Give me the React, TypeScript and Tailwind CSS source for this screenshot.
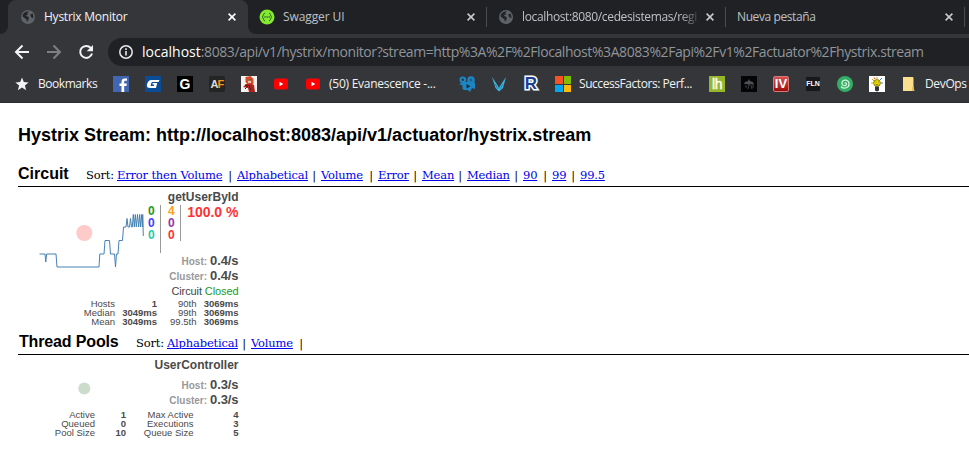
import React from "react";

const ui = "font-['Open_Sans',sans-serif]";
const arial = "font-['Liberation_Sans',Arial,sans-serif]";

function Globe() {
  return (
    <svg width="16" height="16" viewBox="0 0 16 16" className="shrink-0">
      <circle cx="8" cy="8" r="7" fill="#5f6368" />
      <path d="M2.4 7.300C2.800 4 5.500 2.200 9 2.600L7.300 4 8 5.600 5.600 6.600 8.800 8.200 8.600 10.400 6.800 13 6.600 10.600 4.500 9ZM10.200 5.400 12.800 4.600 13.600 9 11.400 8.400Z" fill="#242529" />
    </svg>
  );
}

function Close({ color = "#c5c8cc" }: { color?: string }) {
  return (
    <svg width="8" height="8" viewBox="0 0 8 8" className="shrink-0">
      <path d="M.6.6 7.4 7.4M7.4.6.6 7.4" stroke={color} strokeWidth="1.6" />
    </svg>
  );
}

function Tabs() {
  return (
    <div className="flex h-[34px] bg-[#202124] text-[12px] leading-[34px] text-[#bdc1c6]">
      <div className="w-2 shrink-0 bg-[#35363a]"><div className="h-full rounded-br-[8px] bg-[#202124]" /></div>
      <div className="flex w-[240px] shrink-0 items-center rounded-t-[8px] bg-[#35363a] pl-3 text-[#f1f3f4]">
        <Globe />
        <span className="ml-2 w-[184px] whitespace-nowrap tracking-[-0.24px]">Hystrix Monitor</span>
        <Close color="#fff" />
      </div>
      <div className="w-[238px] shrink-0 bg-[#35363a]">
        <div className="flex h-full items-center rounded-bl-[8px] border-r border-transparent bg-[#202124] pl-[11px]">
          <svg width="16" height="16" viewBox="0 0 16 16" className="shrink-0">
            <circle cx="8" cy="8" r="7.5" fill="#85ea2d" />
            <path d="M6 4.200C4 4 4.800 7.400 3.200 8 4.800 8.600 4 12 6 11.800M10 4.200c2-.2 1.200 3.200 2.800 3.800C11.200 8.600 12 12 10 11.800" stroke="#2f6230" fill="none" />
            <path d="M5.400 8h5.600" stroke="#2f6230" strokeWidth="1.300" strokeDasharray="1.300 .8" />
          </svg>
          <span className="ml-[8px] w-[184px] whitespace-nowrap tracking-[-0.1px]">Swagger UI</span>
          <Close />
        </div>
      </div>
      <div className="flex w-[239px] shrink-0 items-center">
        <i className="h-5 w-px bg-[#4a4c50]" />
        <span className="ml-[11px] flex"><Globe /></span>
        <span className="ml-2 w-[177px] whitespace-nowrap tracking-[-0.36px] [mask-image:linear-gradient(to_right,black_158px,transparent_180px)]">localhost:8080/cedesistemas/regi</span>
        <span className="ml-[7px] flex"><Close /></span>
      </div>
      <div className="flex w-[239px] shrink-0 items-center">
        <i className="h-5 w-px bg-[#4a4c50]" />
        <span className="ml-[11px] w-[208px] whitespace-nowrap tracking-[-0.4px]">Nueva pestaña</span>
        <Close />
      </div>
      <i className="mt-[7px] h-5 w-px bg-[#4a4c50]" />
    </div>
  );
}

function Toolbar() {
  return (
    <div className="flex h-[36px] items-center bg-[#35363a] pl-[14px]">
      <svg width="16" height="16" viewBox="0 0 16 16"><path d="M15 8H2M8.500 1.500 2 8l6.500 6.500" stroke="#f1f3f4" strokeWidth="2" fill="none" /></svg>
      <svg width="16" height="16" viewBox="0 0 16 16" className="ml-4"><path d="M1 8h13M7.500 1.500 14 8l-6.500 6.500" stroke="#7d7f83" strokeWidth="2" fill="none" /></svg>
      <svg width="16" height="16" viewBox="0 0 16 16" className="ml-4"><path d="M12.800 4A6 6 0 1 0 14 9.500" stroke="#f1f3f4" strokeWidth="2" fill="none" /><path d="M15 1v6.300H8.700Z" fill="#f1f3f4" /></svg>
      <div className="ml-[14px] flex h-7 flex-1 items-center rounded-l-full bg-[#202124] pl-[11px]">
        <svg width="14" height="14" viewBox="0 0 14 14"><circle cx="7" cy="7" r="6.200" stroke="#e8eaed" strokeWidth="1.500" fill="none" /><path d="M7 6v4.500M7 3.300v1.700" stroke="#e8eaed" strokeWidth="1.600" /></svg>
        <span className="ml-[9px] whitespace-nowrap text-[14px] leading-7 tracking-[-0.42px] text-[#8f959b]"><span className="tracking-[0.02px] text-white">localhost</span>:8083/api/v1/hystrix/monitor?stream=http%3A%2F%2Flocalhost%3A8083%2Fapi%2Fv1%2Factuator%2Fhystrix.stream</span>
      </div>
    </div>
  );
}

function YouTube() {
  return <svg width="16" height="16" viewBox="0 0 16 16" className="shrink-0"><rect x="1" y="2.500" width="14" height="11" rx="2.500" fill="#f00" /><path d="M6.500 5.800v4.400L10.300 8Z" fill="#fff" /></svg>;
}

function Bookmarks() {
  return (
    <div className="flex h-[33px] items-center gap-4 border-b border-[#292a2d] bg-[#35363a] pb-[4px] pl-[14px] text-[12px] leading-[28px] text-[#f1f3f4]">
      <div className="flex w-[83px] shrink-0 items-center gap-2">
        <svg width="16" height="16" viewBox="0 0 16 16" className="shrink-0"><path d="m8 1.500 1.800 4.600 4.800.3-3.700 3.100 1.200 4.800L8 11.600l-4.100 2.700 1.200-4.800L1.400 6.400l4.800-.3Z" fill="#f1f3f4" /></svg>
        <span className="whitespace-nowrap tracking-[-0.45px]">Bookmarks</span>
      </div>
      <svg width="16" height="16" viewBox="0 0 16 16" className="shrink-0"><rect width="16" height="16" fill="#4267b2" /><path d="M8.500 16V10H6.500V7.500h2V6c0-2.400 1.300-3.500 3.200-3.500H14v2.300h-1.500c-1 0-1.300.4-1.300 1.300v1.400h2.700l-.4 2.500h-2.300v6Z" fill="#fff" /></svg>
      <svg width="16" height="16" viewBox="0 0 16 16" className="shrink-0"><rect width="16" height="16" fill="#0b4c97" /><path d="M14.500 4H6.500C4 4 2.500 6 2 8.500 1.500 11 2.500 12 5 12h6l1.200-5H7.700l-.4 1.500h1.900L8.800 10H5.600l.8-3.200c.2-.6.5-.9 1.200-.9h6Z" fill="#fff" /></svg>
      <div className={`flex size-4 shrink-0 items-center justify-center bg-black text-[14px] leading-4 font-bold text-white ${arial}`}>G</div>
      <div className={`flex size-4 shrink-0 items-center justify-center rounded-[2px] bg-[#242424] text-[11px] leading-4 font-bold tracking-[-0.8px] text-[#ddd] ${arial}`}>A<span className="text-[#f7941d]">F</span></div>
      <svg width="16" height="16" viewBox="0 0 16 16" className="shrink-0"><rect width="16" height="16" fill="#f4f1ee" /><path d="m4.500 1 5-1 3 3v5l-5 1-3-3Z" fill="#d94a28" /><path d="m7 3 3 1v4H7Z" fill="#f2bd9d" /><path d="m5 8 4-1 4 2 1 7H8L7 12l-5-1Z" fill="#b8201b" /><path d="m4 9 3 1-3 3M8 9l2 5M7 4h3" stroke="#45221e" fill="none" /></svg>
      <YouTube />
      <div className="flex w-[138px] shrink-0 items-center gap-2">
        <YouTube />
        <span className="whitespace-nowrap tracking-[-0.25px]">(50) Evanescence -...</span>
      </div>
      <svg width="16" height="16" viewBox="0 0 16 16" className="shrink-0">
        <g fill="#1a86c4"><circle cx="3.800" cy="3.800" r="3.300" /><circle cx="12" cy="4" r="3.800" /><path d="M4 6h8l1 1 3-.5V13l-3-1-1 2-1 2-2-2H5l-1.500-1V9.500L0 8Z" /></g>
        <circle cx="3.800" cy="3.800" r="1.200" fill="#35363a" /><circle cx="12" cy="4" r="1.500" fill="#245b80" /><path d="M7.500 8v4.500L11.500 10.300Z" fill="#202a38" />
      </svg>
      <svg width="16" height="16" viewBox="0 0 16 16" className="shrink-0"><path d="m1 1 6 9 1 2 1-2 6-9-3 11-4 3.500L4.500 12Z" fill="#3ab7e5" /><path d="m4 8 3 5M12 8l-3 5" stroke="#246b8a" strokeWidth=".7" /></svg>
      <div className={`flex size-4 shrink-0 items-center justify-center text-[17px] leading-4 font-bold text-[#1d3d91] [-webkit-text-stroke:3px_white] [paint-order:stroke_fill] ${arial}`}>R</div>
      <div className="flex w-[138px] shrink-0 items-center gap-2">
        <div className="grid size-4 shrink-0 grid-cols-2 gap-px"><i className="bg-[#f35325]" /><i className="bg-[#81bc06]" /><i className="bg-[#05a6f0]" /><i className="bg-[#ffba08]" /></div>
        <span className="whitespace-nowrap tracking-[-0.44px]">SuccessFactors: Perf...</span>
      </div>
      <div className={`flex size-4 shrink-0 items-center justify-center bg-[#96b72b] text-[14px] leading-4 tracking-[-0.5px] text-white [-webkit-text-stroke:0.4px_white] ${arial}`}>lh</div>
      <svg width="16" height="16" viewBox="0 0 16 16" className="shrink-0"><rect width="16" height="16" fill="#050505" /><path d="m3 8 1-2 3-1 1-2 1 2 3 1 1 3-3-1-2 1-2-1Z" fill="#4c5053" /><path d="M5 9v3M8 9l-1 4M10 9l1 4M12 9v3" stroke="#3c4043" /></svg>
      <div className={`flex size-4 shrink-0 items-center justify-center rounded-[2px] border border-[#db7777] bg-linear-to-b from-[#d55151] to-[#9b0505] text-[13px] leading-4 font-bold text-white ${arial}`}>IV</div>
      <div className={`flex size-4 shrink-0 items-center justify-center border border-[#343434] bg-[#18191a] text-[7px] leading-4 font-bold text-white ${arial}`}>FLN</div>
      <svg width="16" height="16" viewBox="0 0 16 16" className="shrink-0"><circle cx="8" cy="8" r="8" fill="#34ad65" /><path d="M4 10.500C7 14 12.500 11.500 12 7.500 11.500 3.500 6 3 5 6.500 4.300 9.500 8.500 11 9.500 8.500 9.800 7 8.300 6.300 7.500 7.300" fill="none" stroke="#d5f7df" strokeWidth="1.200" /></svg>
      <svg width="16" height="16" viewBox="0 0 16 16" className="shrink-0"><rect width="16" height="16" fill="#fff" /><path d="M3 3 5 5M8 1v2M2 7h2" stroke="#d8a800" /><path d="m13 2-2 2M12 7h2" stroke="#3a80d0" /><path d="M5 1.500 6 3" stroke="#d33" /><circle cx="8" cy="7" r="3.400" fill="#f4e400" stroke="#6b6200" strokeWidth=".8" /><path d="M6 10.500h4v4l-2 1-2-1Z" fill="#333" /><path d="M6.500 6h1M8.700 6h1M6.500 8c1 1 2 1 3 0" stroke="#333" fill="none" strokeWidth=".7" /></svg>
      <div className="flex items-center gap-2">
        <svg width="16" height="16" viewBox="0 0 16 16" className="shrink-0"><path d="M2 1h9.500q1 0 1 1v9.500l1 3.500H2Z" fill="#fbdf8c" /><path d="M11 11h2v4h-2Z" fill="#e8be4d" /></svg>
        <span className="whitespace-nowrap tracking-[-0.35px]">DevOps</span>
      </div>
    </div>
  );
}

function Heading({ title, titleClass, links, trailing }: { title: string; titleClass: string; links: [string, string][]; trailing?: boolean }) {
  return (
    <div className="flex h-[24px] items-center border-b border-black">
      <h2 className={`shrink-0 pb-[2px] whitespace-nowrap text-[16px] leading-[22px] font-bold ${arial} ${titleClass}`}>{title}</h2>
      <div className="flex pt-px font-['DejaVu_Serif',serif] text-[11.5px] leading-[18px] tracking-[-0.18px] whitespace-nowrap">
        <span className="w-[31px]">Sort:</span>
        {links.map(([name, style], i) => (
          <React.Fragment key={name}>
            <a className={`text-[#0000ee] underline ${style}`}>{name}</a>
            {(i < links.length - 1 || trailing) && <span className="w-[14px] text-center">|</span>}
          </React.Fragment>
        ))}
      </div>
    </div>
  );
}

function Rate({ label, value }: { label: string; value: string }) {
  return (
    <div className="flex h-[15px] items-baseline justify-end gap-[3px] leading-[15px] font-bold">
      <span className="text-[10px] text-[#999]">{label}:</span>
      <span className="text-[13px] tracking-[-0.1px] text-[#4a4a4a]">{value}</span>
    </div>
  );
}

function Stats({ rows, cols }: { rows: string[][]; cols: string }) {
  return (
    <div className={`grid auto-rows-[9px] text-right text-[9.5px] leading-[9px] whitespace-nowrap text-[#4a4a4a] ${cols}`}>
      {rows.flat().map((t, i) => <span key={i} className={i % 2 ? "font-bold" : ""}>{t}</span>)}
    </div>
  );
}

export default function App() {
  return (
    <div className={`h-[459px] w-[969px] overflow-hidden bg-white text-black ${ui}`}>
      <Tabs />
      <Toolbar />
      <Bookmarks />
      <main className="pl-[18px]">
        <h1 className={`pt-[21px] text-[18px] leading-[22px] font-bold whitespace-nowrap ${arial}`}>Hystrix Stream: http://localhost:8083/api/v1/actuator/hystrix.stream</h1>
        <div className="h-[17px]" />
        <Heading title="Circuit" titleClass="w-[68px]" links={[["Error then Volume", "w-[106px]"], ["Alphabetical", "w-[70px]"], ["Volume", "w-[43px]"], ["Error", "w-[30px]"], ["Mean", "w-[31px]"], ["Median", "w-[42px]"], ["90", "w-[15px]"], ["99", "w-[14px]"], ["99.5", "w-[25px]"]]} />
        <div className={`relative h-[144px] w-[220.5px] ${arial}`}>
          <svg width="135" height="90" viewBox="18 187 135 90" className="absolute top-0 left-0">
            <circle cx="84.300" cy="233" r="8" fill="#ffcaca" />
            <path d="M39.500 254H45l.8 8 .8-8H56l1 13h42l.8-13h4.200l1-13.500h4.500l1 13.500h4l1 13 1-13h1.500l1-13.500h3.500l1-13.500h2.500l1-8.500 1 8.500h1.500l1-8.500 1 8.500h.8l1-12.500 1 12.500 1-12.500 1 12.500 1.200-12.500 1.200 12.500 1-12.500 1 12.500 1-12.500 1 12.500V214.500l.6 21.500" fill="none" stroke="#4682b4" strokeWidth="1" />
          </svg>
          <div className="relative h-[18px] pt-[3px] text-right text-[12px] leading-[14px] font-bold text-[#4a4a4a]">getUserById</div>
          <div className="relative flex h-[48px] pl-[130px] text-[12px] leading-3 font-bold">
            <div className="w-3"><p className="text-[#229922]">0</p><p className="text-[#4040ff]">0</p><p className="text-[#22ccaa]">0</p></div>
            <i className="h-[48px] w-px bg-[#999]" />
            <div className="w-[19px] pl-[7px]"><p className="text-[#ff9f22]">4</p><p className="text-[#9933aa]">0</p><p className="text-[#ff3333]">0</p></div>
            <i className="h-[36px] w-px bg-[#999]" />
            <span className="flex-1 text-right text-[14px] leading-[15px] text-[#ff3333]">100.0 %</span>
          </div>
          <Rate label="Host" value="0.4/s" />
          <Rate label="Cluster" value="0.4/s" />
          <div className="h-[16px] pt-px text-right text-[11px] leading-[15px] tracking-[-0.1px] text-[#444]">Circuit <span className="text-[#229922]">Closed</span></div>
          <Stats cols="grid-cols-[97px_42px_39.5px_42px]" rows={[["Hosts", "1", "90th", "3069ms"], ["Median", "3049ms", "99th", "3069ms"], ["Mean", "3049ms", "99.5th", "3069ms"]]} />
        </div>
        <Heading title="Thread Pools" titleClass="w-[118px] pl-px tracking-[-0.15px]" trailing links={[["Alphabetical", "w-[70px]"], ["Volume", "w-[43px]"]]} />
        <div className={`relative h-[90px] w-[220.5px] ${arial}`}>
          <svg width="80" height="60" viewBox="18 355 80 60" className="absolute top-0 left-0"><circle cx="84.300" cy="388.500" r="6" fill="#ccdccc" /></svg>
          <div className="h-[22px] pt-[3px] text-right text-[12px] leading-[14px] font-bold text-[#4a4a4a]">UserController</div>
          <Rate label="Host" value="0.3/s" />
          <Rate label="Cluster" value="0.3/s" />
          <div className="h-[3px]" />
          <Stats cols="grid-cols-[77px_31px_67.5px_45px]" rows={[["Active", "1", "Max Active", "4"], ["Queued", "0", "Executions", "3"], ["Pool Size", "10", "Queue Size", "5"]]} />
        </div>
      </main>
    </div>
  );
}
